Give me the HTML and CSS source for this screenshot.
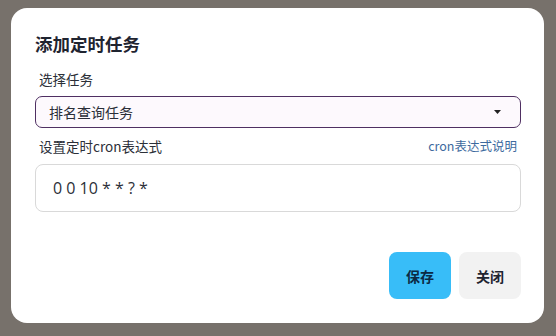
FILE: index.html
```html
<!DOCTYPE html>
<html lang="zh-CN">
<head>
<meta charset="utf-8">
<title>添加定时任务</title>
<link rel="stylesheet" href="styles.css">
</head>
<body>
<div class="modal">
  <h3 class="title">添加定时任务</h3>
  <div class="label">选择任务</div>
  <div class="select">
    <span>排名查询任务</span>
    <svg class="caret" width="7" height="4" viewBox="0 0 7 4"><path d="M0 0h7L3.5 4z" fill="#222"/></svg>
  </div>
  <div class="label row">
    <span>设置定时cron表达式</span>
    <a class="help">cron表达式说明</a>
  </div>
  <div class="input">0 0 10 * * ? *</div>
  <div class="actions">
    <button class="btn primary">保存</button>
    <button class="btn">关闭</button>
  </div>
</div>
</body>
</html>
```

FILE: styles.css
```css
html, body {
  margin: 0;
  padding: 0;
}
body {
  background: #77716b;
  width: 556px;
  height: 336px;
  overflow: hidden;
  font-family: "Noto Sans CJK SC", "Open Sans", "Noto Sans", sans-serif;
  color: #1f2430;
}
.modal {
  box-sizing: border-box;
  margin: 8px 0 0 11px;
  width: 533px;
  height: 315px;
  background: #ffffff;
  border-radius: 16px;
  padding: 24px 23px 24px 24px;
  display: flex;
  flex-direction: column;
}
.title {
  margin: 0;
  font-size: 17.5px;
  line-height: 24px;
  font-weight: 700;
  color: #1f2430;
}
.label {
  margin-top: 13px;
  padding-left: 4px;
  font-size: 13.5px;
  line-height: 20px;
  color: #2b2f38;
}
.row {
  margin-top: 8px;
  display: flex;
  justify-content: space-between;
  padding-right: 4px;
}
.help {
  color: #3d6a9e;
  font-size: 12.5px;
}
.select {
  margin-top: 7px;
  box-sizing: border-box;
  height: 32px;
  border: 1px solid #4f2f62;
  border-radius: 7px;
  background: #fdf9fd;
  display: flex;
  align-items: center;
  justify-content: space-between;
  padding: 0 19px 0 13px;
  font-size: 14px;
  color: #2b2f38;
}
.caret {
  display: block;
}
.input {
  margin-top: 8px;
  box-sizing: border-box;
  height: 48px;
  border: 1px solid #d9d9d9;
  border-radius: 8px;
  display: flex;
  align-items: center;
  padding: 0 17px;
  font-family: "Open Sans", sans-serif;
  font-size: 16px;
  color: #2b2f38;
}
.actions {
  margin-top: 40px;
  display: flex;
  justify-content: flex-end;
  gap: 8px;
}
.btn {
  height: 47px;
  width: 62px;
  border: none;
  border-radius: 8px;
  background: #f2f2f2;
  font-family: "Noto Sans CJK SC", sans-serif;
  font-size: 14px;
  font-weight: 700;
  color: #1f2430;
  padding: 0;
}
.btn.primary {
  background: #38bdf8;
  color: #0b2a44;
}
```
